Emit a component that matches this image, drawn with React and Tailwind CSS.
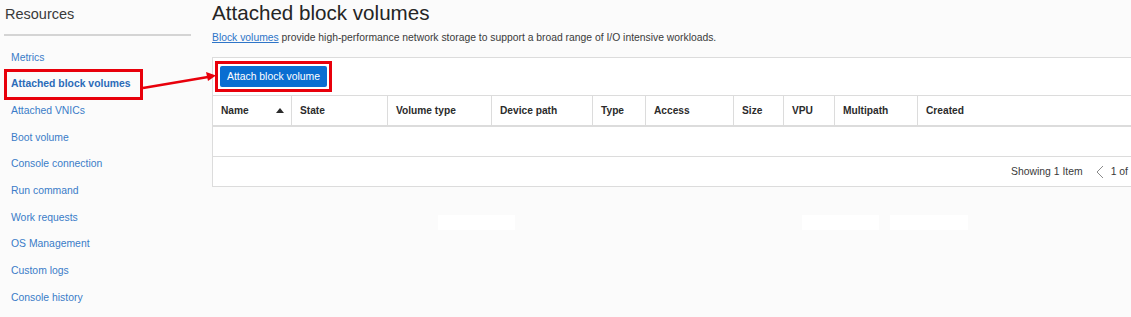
const navItems = [
  "Metrics",
  "Attached block volumes",
  "Attached VNICs",
  "Boot volume",
  "Console connection",
  "Run command",
  "Work requests",
  "OS Management",
  "Custom logs",
  "Console history",
];

const columns = [
  { label: "Name", w: "w-[79px]", sort: true },
  { label: "State", w: "w-[96px]" },
  { label: "Volume type", w: "w-[104px]" },
  { label: "Device path", w: "w-[101px]" },
  { label: "Type", w: "w-[53px]" },
  { label: "Access", w: "w-[88px]" },
  { label: "Size", w: "w-[50px]" },
  { label: "VPU", w: "w-[51px]" },
  { label: "Multipath", w: "w-[83px]" },
  { label: "Created", w: "flex-1" },
];

export default function App() {
  return (
    <div className="relative w-[1131px] h-[317px] overflow-hidden bg-[#fbfbfb] font-['Liberation_Sans',Arial,sans-serif] text-[#161513]">
      <div className="flex">
        {/* sidebar */}
        <aside className="w-[212px] shrink-0 pl-[4px] pt-[4px]">
          <h2 className="pl-[1px] text-[14.5px] leading-[20px] text-[#3a3a3a]">Resources</h2>
          <div className="mt-[10px] w-[187px] border-t-2 border-[#d4d4d4]" />
          <nav className="mt-[8px] flex flex-col">
            {navItems.map((item, i) => (
              <div key={item} className="h-[26.7px] flex items-center">
                {i === 1 ? (
                  <span className="flex h-[31px] w-[139px] items-center border-[3px] border-[#e8000b] pl-[4px] text-[10.4px] font-bold text-[#2b6bb8]">
                    {item}
                  </span>
                ) : (
                  <span className="pl-[7px] text-[10.4px] text-[#3a7bc8]">{item}</span>
                )}
              </div>
            ))}
          </nav>
        </aside>

        {/* main */}
        <main className="flex-1 min-w-0">
          <h1 className="pt-[1px] text-[20.6px] leading-[24px] text-[#252525]">Attached block volumes</h1>
          <p className="mt-[6px] text-[10.35px] leading-[14px] text-[#3a3a3a]">
            <span className="text-[#2e75c8] underline">Block volumes</span> provide high-performance network storage to support a broad range of I/O intensive workloads.
          </p>

          <div className="mt-[12px] w-[1000px] border border-[#dcdcdc] bg-white">
            <div className="h-[37px] pl-[2px] pt-[3px]">
              <div className="inline-flex border-[3px] border-[#e8000b] p-[2px]">
                <button className="h-[21px] rounded-[2px] bg-[#0a6ed1] px-[7px] text-[10.4px] text-white">
                  Attach block volume
                </button>
              </div>
            </div>
            <div className="flex h-[32px] border-t border-b-2 border-[#dcdcdc]">
              {columns.map((c) => (
                <div
                  key={c.label}
                  className={`${c.w} flex items-center justify-between border-r border-[#dcdcdc] pl-[8px] pr-[10px] text-[10.2px] font-bold text-[#2b2b2b] last:border-r-0`}
                >
                  <span>{c.label}</span>
                  {c.sort && (
                    <svg width="8" height="5" viewBox="0 0 8 5" className="-mr-[3px]">
                      <path d="M0 5 L4 0 L8 5 Z" fill="#2b2b2b" />
                    </svg>
                  )}
                </div>
              ))}
            </div>
            <div className="h-[30px] border-b border-[#dcdcdc]" />
            <div className="flex h-[29px] items-center text-[10.4px] text-[#3a3a3a]">
              <span className="ml-[798px]">Showing 1 Item</span>
              <svg width="8" height="14" viewBox="0 0 8 14" className="ml-[13px]">
                <path d="M7 1 L1 7 L7 13" stroke="#8a8a8a" strokeWidth="1" fill="none" />
              </svg>
              <span className="ml-[7px]">1 of</span>
            </div>
          </div>

          <div className="mt-[28px] flex h-[15px]">
            <div className="ml-[226px] w-[77px] bg-white" />
            <div className="ml-[287px] w-[77px] bg-white" />
            <div className="ml-[11px] w-[78px] bg-white" />
          </div>
        </main>
      </div>

      {/* callout arrow */}
      <svg className="absolute left-0 top-0 pointer-events-none" width="1131" height="317">
        <line x1="143" y1="88" x2="208" y2="77" stroke="#e8000b" strokeWidth="2.5" />
        <path d="M216 75.5 L206 72 L208 81 Z" fill="#e8000b" />
      </svg>
    </div>
  );
}
